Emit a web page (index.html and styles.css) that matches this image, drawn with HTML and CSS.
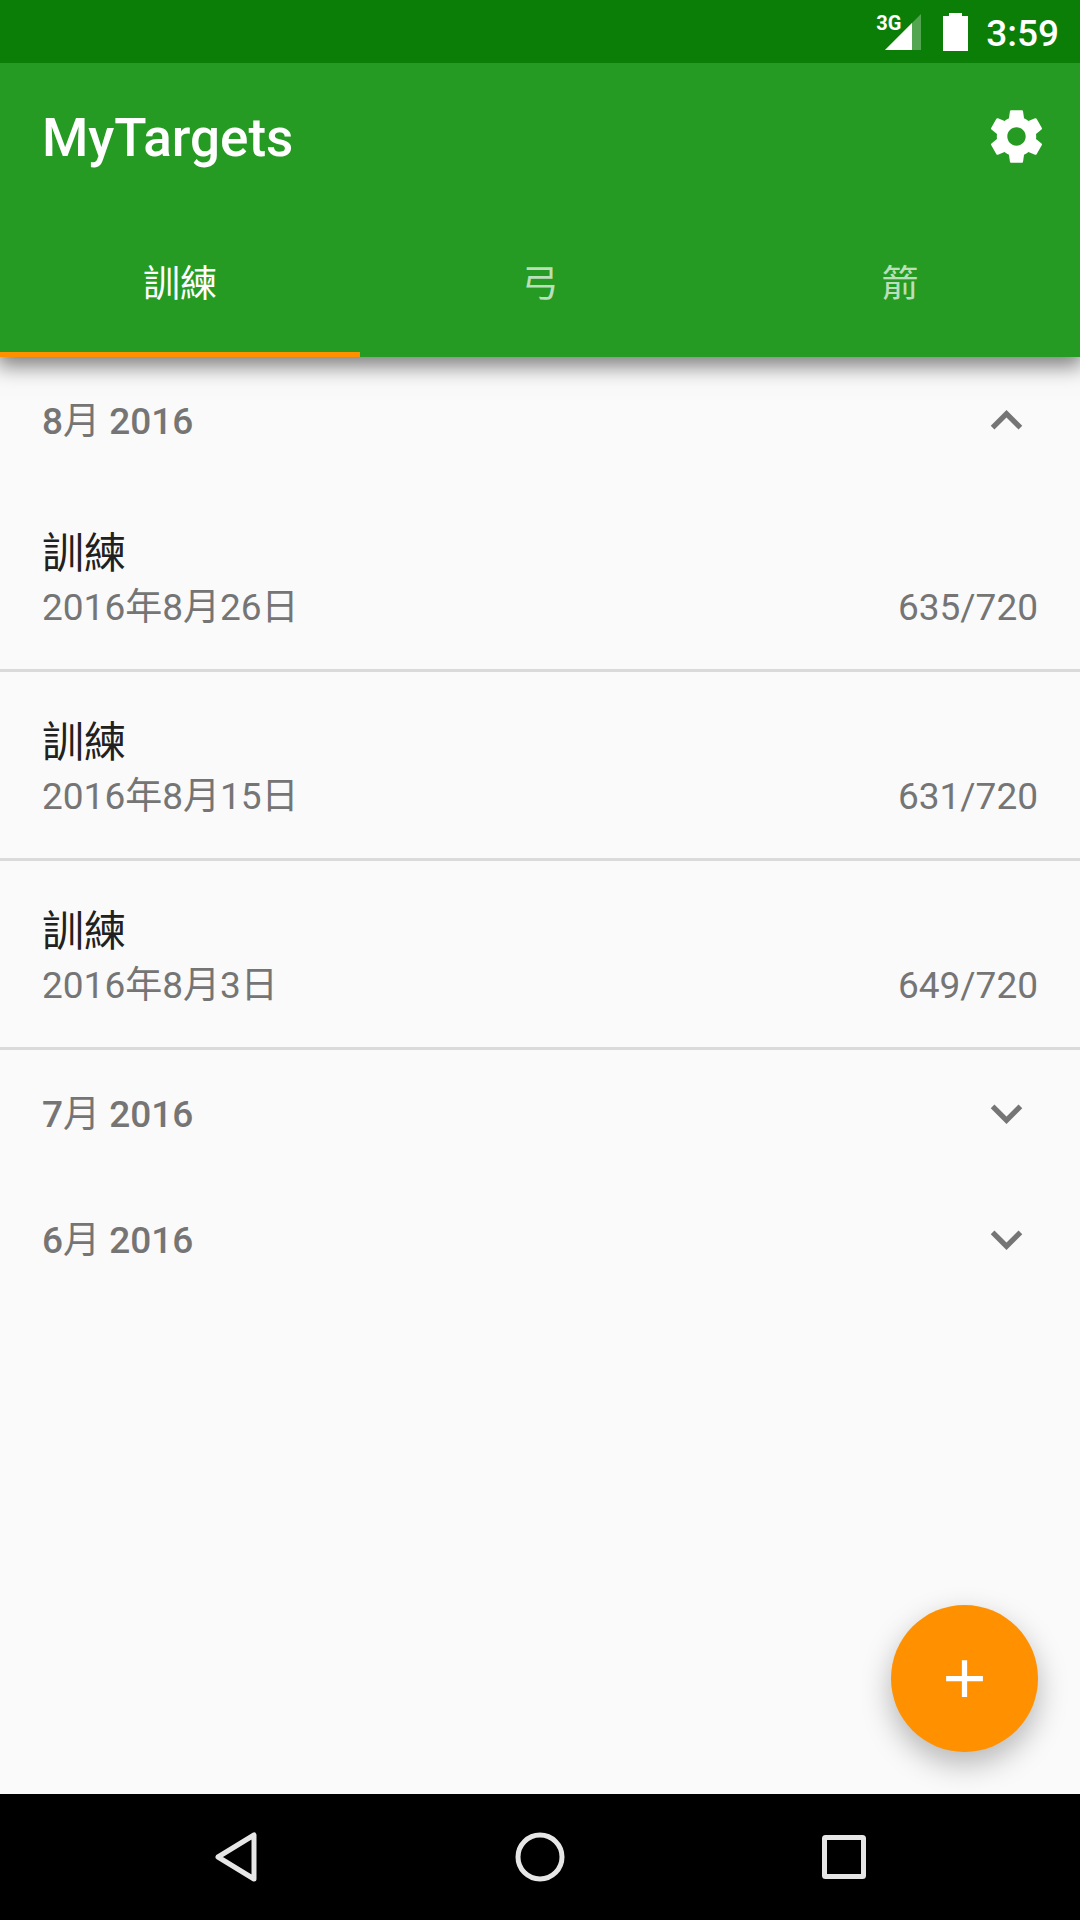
FILE: index.html
```html
<!DOCTYPE html>
<html lang="zh-Hant">
<head>
  <meta charset="UTF-8" />
  <meta name="viewport" content="width=device-width, initial-scale=1" />
  <title>MyTargets</title>
  <link rel="stylesheet" href="styles.css">
</head>
<body>
  <div class="status-bar">
    <div class="signal">
      <span class="network">3G</span>
      <svg width="36" height="36" viewBox="0 0 36 36">
        <path d="M36 0V36H0Z" fill="#fff" opacity="0.3" />
        <path d="M27 9V36H0Z" fill="#fff" />
      </svg>
    </div>
    <svg width="25" height="38" viewBox="0 0 25 38">
      <path d="M6 0H19V3H25V38H0V3H6Z" fill="#fff" />
    </svg>
    <span class="clock">3:59</span>
  </div>

  <header class="app-bar">
    <div class="toolbar">
      <h1>MyTargets</h1>
      <button class="icon-button" aria-label="設定">
        <svg class="icon" viewBox="0 0 24 24">
          <path d="M19.43 12.98c.04-.32.07-.64.07-.98s-.03-.66-.07-.98l2.11-1.65c.19-.15.24-.42.12-.64l-2-3.46c-.12-.22-.39-.3-.61-.22l-2.49 1c-.52-.4-1.08-.73-1.69-.98l-.38-2.65C14.46 2.18 14.25 2 14 2h-4c-.25 0-.46.18-.49.42l-.38 2.65c-.61.25-1.17.59-1.69.98l-2.49-1c-.23-.09-.49 0-.61.22l-2 3.46c-.13.22-.07.49.12.64l2.11 1.65c-.04.32-.07.65-.07.98s.03.66.07.98l-2.11 1.65c-.19.15-.24.42-.12.64l2 3.46c.12.22.39.3.61.22l2.49-1c.52.4 1.08.73 1.69.98l.38 2.65c.03.24.24.42.49.42h4c.25 0 .46-.18.49-.42l.38-2.65c.61-.25 1.17-.59 1.69-.98l2.49 1c.23.09.49 0 .61-.22l2-3.46c.12-.22.07-.49-.12-.64l-2.11-1.65zM12 15.5c-1.93 0-3.5-1.57-3.5-3.5s1.57-3.5 3.5-3.5 3.5 1.57 3.5 3.5-1.57 3.5-3.5 3.5z" />
        </svg>
      </button>
    </div>
    <nav class="tabs">
      <button class="tab active">訓練</button>
      <button class="tab">弓</button>
      <button class="tab">箭</button>
    </nav>
  </header>

  <main class="content">
    <details open>
      <summary>
        <span class="month"><b>8</b>月 <b>2016</b></span>
        <svg class="icon chevron" viewBox="0 0 24 24"><path d="M16.59 8.59L12 13.17 7.41 8.59 6 10l6 6 6-6z" /></svg>
      </summary>
      <ul class="trainings">
        <li>
          <h2>訓練</h2>
          <div class="info"><span>2016年8月26日</span><span>635/720</span></div>
        </li>
        <li>
          <h2>訓練</h2>
          <div class="info"><span>2016年8月15日</span><span>631/720</span></div>
        </li>
        <li>
          <h2>訓練</h2>
          <div class="info"><span>2016年8月3日</span><span>649/720</span></div>
        </li>
      </ul>
    </details>
    <details>
      <summary>
        <span class="month"><b>7</b>月 <b>2016</b></span>
        <svg class="icon chevron" viewBox="0 0 24 24"><path d="M16.59 8.59L12 13.17 7.41 8.59 6 10l6 6 6-6z" /></svg>
      </summary>
    </details>
    <details>
      <summary>
        <span class="month"><b>6</b>月 <b>2016</b></span>
        <svg class="icon chevron" viewBox="0 0 24 24"><path d="M16.59 8.59L12 13.17 7.41 8.59 6 10l6 6 6-6z" /></svg>
      </summary>
    </details>

    <button class="fab" aria-label="新增">
      <svg class="icon" viewBox="0 0 24 24"><path d="M19 13h-6v6h-2v-6H5v-2h6V5h2v6h6v2z" /></svg>
    </button>
  </main>

  <nav class="nav-bar">
    <button aria-label="返回">
      <svg width="50" height="50" viewBox="0 0 50 50"><path d="M43 3V47L7 25Z" /></svg>
    </button>
    <button aria-label="主畫面">
      <svg width="50" height="50" viewBox="0 0 50 50"><circle cx="25" cy="25" r="22" /></svg>
    </button>
    <button aria-label="最近">
      <svg width="50" height="50" viewBox="0 0 50 50"><rect x="5.5" y="5.5" width="39" height="39" rx="1" /></svg>
    </button>
  </nav>
</body>
</html>
```

FILE: styles.css
```css
* {
  box-sizing: border-box;
}
body {
  display: flex;
  flex-direction: column;
  min-height: 100vh;
  margin: 0;
  background: #fafafa;
  color: #757575;
  font-family: Roboto, "Noto Sans CJK TC", sans-serif;
  font-size: 37px;
  line-height: 54px;
}
button {
  padding: 0;
  border: none;
  background: none;
  color: inherit;
  font: inherit;
  cursor: pointer;
}
svg {
  display: block;
  flex: none;
}
.icon {
  width: 63px;
  height: 63px;
  fill: currentColor;
}

/* status bar */
.status-bar {
  position: relative;
  z-index: 2;
  display: flex;
  justify-content: flex-end;
  align-items: center;
  height: 63px;
  padding-right: 21px;
  background: #0a7e07;
  color: #fff;
}
.signal {
  position: relative;
  margin-right: 22px;
}
.network {
  position: absolute;
  top: -1px;
  left: -9px;
  font-size: 20px;
  font-weight: 700;
  line-height: 20px;
}
.clock {
  margin-left: 18px;
  padding-top: 4px;
  font-weight: 500;
}

/* app bar */
.app-bar {
  position: relative;
  z-index: 1;
  background: #259b24;
  color: #fff;
  box-shadow: 0 6px 20px 3px rgba(0, 0, 0, 0.5);
}
.toolbar {
  display: flex;
  justify-content: space-between;
  align-items: center;
  height: 146px;
  padding: 0 32px 0 42px;
}
h1 {
  margin: 0;
  padding-top: 4px;
  font-size: 53px;
  font-weight: 500;
}
.tabs {
  display: flex;
}
.tab {
  flex: 1;
  height: 148px;
  padding-top: 8px;
  border-bottom: 5px solid transparent;
  color: rgba(255, 255, 255, 0.7);
}
.tab.active {
  border-bottom-color: #ff9100;
  color: #fff;
}

/* training list */
.content {
  position: relative;
  flex: 1;
}
summary {
  display: flex;
  justify-content: space-between;
  align-items: center;
  height: 126px;
  padding: 0 42px;
  list-style: none;
  cursor: pointer;
}
.month {
  padding-top: 4px;
}
.month b {
  font-weight: 500;
}
details[open] .chevron {
  transform: rotate(180deg);
}
.trainings {
  margin: 0;
  padding: 0;
  list-style: none;
}
.trainings li {
  padding: 44px 42px 34px;
  border-bottom: 3px solid #dadada;
}
h2 {
  margin: 0;
  color: #212121;
  font-size: 42px;
  font-weight: 400;
}
.info {
  display: flex;
  justify-content: space-between;
}
.fab {
  position: absolute;
  right: 42px;
  bottom: 42px;
  display: flex;
  justify-content: center;
  align-items: center;
  width: 147px;
  height: 147px;
  border-radius: 50%;
  background: #ff9100;
  color: #fff;
  box-shadow: 0 12px 30px rgba(0, 0, 0, 0.28);
}

/* navigation bar */
.nav-bar {
  position: relative;
  display: flex;
  justify-content: center;
  height: 126px;
  background: #000;
}
.nav-bar button {
  display: flex;
  flex: 0 1 304px;
  justify-content: center;
  align-items: center;
}
.nav-bar svg {
  fill: none;
  stroke: #e6e6e6;
  stroke-width: 5;
  stroke-linejoin: round;
}
```
